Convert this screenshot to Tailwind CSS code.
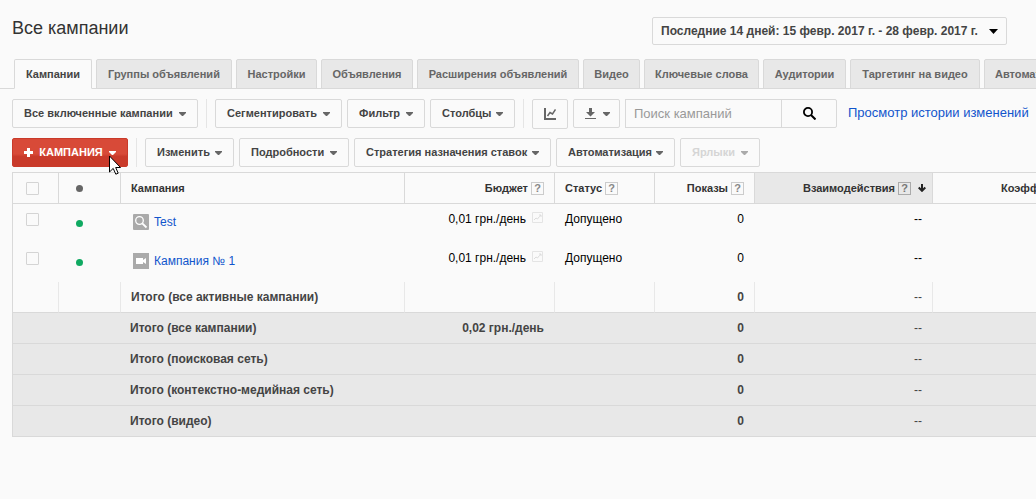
<!DOCTYPE html>
<html lang="ru">
<head>
  <meta charset="UTF-8" />
  <meta name="viewport" content="width=device-width,initial-scale=1" />
  <title>Все кампании</title>
  <script src="https://cdn.jsdelivr.net/npm/@tailwindcss/browser@4"></script>
</head>
<body class="min-h-screen overflow-x-hidden bg-[#fafafa] font-['Liberation_Sans',Arial,sans-serif] text-xs text-[#444]">

<!-- Shared icons -->
<svg class="hidden" aria-hidden="true">
  <symbol id="caret" viewBox="0 0 7 4"><path d="M0 0h7v1L4 4H3L0 1z" fill="currentColor"/></symbol>
  <symbol id="spark" viewBox="0 0 11 11">
    <path d="M.5.5h10v10H.5z" fill="none" stroke="#e4e4e4"/>
    <path d="M2 8l2-2 1.500 1 2-2.500L9 3M7 3h2v2" fill="none" stroke="#dcdcdc"/>
  </symbol>
</svg>

<header class="flex h-[59px] items-start justify-between pt-[17px] pr-[29px] pl-3">
  <h1 class="text-lg leading-[22px] text-[#333]">Все кампании</h1>
  <button class="flex h-7 w-[355px] items-center justify-between rounded-xs border border-[#d9d9d9] px-2 font-bold whitespace-nowrap">
    Последние 14 дней: 15 февр. 2017 г. - 28 февр. 2017 г.
    <svg class="h-[5px] w-[9px] text-black" viewBox="0 0 9 5"><path d="M0 0h9L4.500 5z" fill="currentColor"/></svg>
  </button>
</header>

<nav class="border-b border-[#d9d9d9] pl-[14px]">
  <div class="-mb-px flex gap-1 text-[11px] font-bold whitespace-nowrap text-[#666]">
    <a href="#" class="flex h-[30px] w-[78px] shrink-0 items-center justify-center rounded-t-xs border border-[#d9d9d9] border-b-[#fafafa] bg-[#fafafa] text-[#444]">Кампании</a>
    <a href="#" class="flex h-[30px] w-[136px] shrink-0 items-center justify-center rounded-t-xs border border-[#d9d9d9] bg-[#e8e8e8]">Группы объявлений</a>
    <a href="#" class="flex h-[30px] w-[81px] shrink-0 items-center justify-center rounded-t-xs border border-[#d9d9d9] bg-[#e8e8e8]">Настройки</a>
    <a href="#" class="flex h-[30px] w-[92px] shrink-0 items-center justify-center rounded-t-xs border border-[#d9d9d9] bg-[#e8e8e8]">Объявления</a>
    <a href="#" class="flex h-[30px] w-[162px] shrink-0 items-center justify-center rounded-t-xs border border-[#d9d9d9] bg-[#e8e8e8]">Расширения объявлений</a>
    <a href="#" class="flex h-[30px] w-[57px] shrink-0 items-center justify-center rounded-t-xs border border-[#d9d9d9] bg-[#e8e8e8]">Видео</a>
    <a href="#" class="flex h-[30px] w-[115px] shrink-0 items-center justify-center rounded-t-xs border border-[#d9d9d9] bg-[#e8e8e8]">Ключевые слова</a>
    <a href="#" class="flex h-[30px] w-[83px] shrink-0 items-center justify-center rounded-t-xs border border-[#d9d9d9] bg-[#e8e8e8]">Аудитории</a>
    <a href="#" class="flex h-[30px] w-[130px] shrink-0 items-center justify-center rounded-t-xs border border-[#d9d9d9] bg-[#e8e8e8]">Таргетинг на видео</a>
    <a href="#" class="flex h-[30px] shrink-0 items-center rounded-t-xs border border-[#d9d9d9] bg-[#e8e8e8] px-[10px]">Автоматические</a>
  </div>
</nav>

<main class="pl-3">
  <div class="flex h-[49px] items-start pt-[10px] text-[11px] font-bold whitespace-nowrap">
    <button class="flex h-[29px] w-[186px] shrink-0 items-center justify-between rounded-xs border border-[#d9d9d9] px-[11px]">Все включенные кампании <svg class="h-1 w-[7px] text-[#666]"><use href="#caret"/></svg></button>
    <div class="mx-2 h-[29px] w-px shrink-0 bg-[#e5e5e5]"></div>
    <div class="flex shrink-0 gap-[5px]">
      <button class="flex h-[29px] w-[127px] items-center justify-between rounded-xs border border-[#d9d9d9] px-[11px]">Сегментировать <svg class="h-1 w-[7px] text-[#666]"><use href="#caret"/></svg></button>
      <button class="flex h-[29px] w-[78px] items-center justify-between rounded-xs border border-[#d9d9d9] px-[11px]">Фильтр <svg class="h-1 w-[7px] text-[#666]"><use href="#caret"/></svg></button>
      <button class="flex h-[29px] w-[85px] items-center justify-between rounded-xs border border-[#d9d9d9] px-[11px]">Столбцы <svg class="h-1 w-[7px] text-[#666]"><use href="#caret"/></svg></button>
    </div>
    <div class="mx-2 h-[29px] w-px shrink-0 bg-[#e5e5e5]"></div>
    <div class="flex shrink-0 gap-[5px]">
      <button class="flex h-[30px] w-9 items-center justify-center rounded-xs border border-[#d9d9d9]" aria-label="График">
        <svg class="h-3 w-3" viewBox="0 0 12 12" fill="none" stroke="#666"><path d="M1 0v11h11" stroke-width="2"/><path d="M3.500 8L6 4.500 8.500 6 11.500 1.500" stroke-width="1.500"/></svg>
      </button>
      <button class="flex h-[29px] w-[47px] items-center justify-between rounded-xs border border-[#d9d9d9] pr-[9px] pl-[11px]" aria-label="Скачать">
        <svg class="h-[11px] w-[11px]" viewBox="0 0 11 11" fill="#666"><path d="M4 0h3v4h3L5.500 8.500 1 4h3zM0 10h11v1H0z"/></svg>
        <svg class="h-1 w-[7px] text-[#666]"><use href="#caret"/></svg>
      </button>
      <div class="flex">
        <input type="text" aria-label="Поиск кампаний" placeholder="Поиск кампаний" class="h-[29px] w-[157px] border border-[#d9d9d9] px-2 text-[13px] font-normal placeholder:text-[#999]" />
        <button class="-ml-px flex h-[29px] w-14 items-center justify-center rounded-r-xs border border-[#d9d9d9]" aria-label="Искать">
          <svg class="h-[13px] w-[13px]" viewBox="0 0 13 13" fill="none" stroke="#000"><circle cx="5" cy="5" r="4.100" stroke-width="1.800"/><path d="M8 8l4.500 4.500" stroke-width="2"/></svg>
        </button>
      </div>
    </div>
    <a href="#" class="ml-[11px] text-[13px] leading-[27px] font-normal text-[#15c]">Просмотр истории изменений</a>
  </div>

  <div class="flex h-[34px] items-start text-[11px] font-bold whitespace-nowrap">
    <div class="relative shrink-0">
      <button class="flex h-[29px] w-[116px] items-center justify-between rounded-xs border border-[#c93a2a] bg-linear-to-b from-[#d84a38] from-55% to-[#c93a2a] to-65% px-[11px] text-white">
        <svg class="h-[9px] w-[9px]" viewBox="0 0 9 9" fill="#fff"><path d="M3 0h3v3h3v3H6v3H3V6H0V3h3z"/></svg>
        КАМПАНИЯ
        <svg class="h-1 w-[7px]"><use href="#caret"/></svg>
      </button>
      <!-- Pointer -->
      <svg class="absolute top-[17px] left-[97px] z-10 h-[20px] w-3" viewBox="0 0 12 20"><path d="M.5 1v16l3.700-3.600 2.600 5.800 2.400-1-2.500-5.700h4.800z" fill="#fff" stroke="#000"/></svg>
    </div>
    <div class="mx-2 h-[29px] w-px shrink-0 bg-[#e5e5e5]"></div>
    <div class="flex shrink-0 gap-[5px]">
      <button class="flex h-[29px] w-[89px] items-center justify-between rounded-xs border border-[#d9d9d9] px-[11px]">Изменить <svg class="h-1 w-[7px] text-[#666]"><use href="#caret"/></svg></button>
      <button class="flex h-[29px] w-[110px] items-center justify-between rounded-xs border border-[#d9d9d9] px-[11px]">Подробности <svg class="h-1 w-[7px] text-[#666]"><use href="#caret"/></svg></button>
      <button class="flex h-[29px] w-[197px] items-center justify-between rounded-xs border border-[#d9d9d9] px-[11px]">Стратегия назначения ставок <svg class="h-1 w-[7px] text-[#666]"><use href="#caret"/></svg></button>
      <button class="flex h-[29px] w-[119px] items-center justify-between rounded-xs border border-[#d9d9d9] px-[11px]">Автоматизация <svg class="h-1 w-[7px] text-[#666]"><use href="#caret"/></svg></button>
      <button disabled class="flex h-[29px] w-20 items-center justify-between rounded-xs border border-[#d9d9d9] px-[11px] text-[#d5d5d5]">Ярлыки <svg class="h-1 w-[7px] text-[#aaa]"><use href="#caret"/></svg></button>
    </div>
  </div>

  <div class="overflow-hidden">
    <table class="w-full min-w-[1120px] table-fixed border-separate border-spacing-0 border-l border-[#d9d9d9] text-right whitespace-nowrap">
      <colgroup>
        <col class="w-[45px]" /><col class="w-[62px]" /><col class="w-[284px]" /><col class="w-[150px]" />
        <col class="w-[100px]" /><col class="w-[100px]" /><col class="w-[178px]" /><col />
      </colgroup>
      <thead class="text-[11px] text-[#333]">
        <tr class="h-8 *:border-y *:border-[#d9d9d9]">
          <th class="pl-[13px]"><input type="checkbox" aria-label="Выбрать все" class="block h-[13px] w-[13px] appearance-none rounded-[1px] border border-[#d4d4d4]" /></th>
          <th class="border-l pl-[17px]"><div class="h-[7px] w-[7px] rounded-full bg-[#666]"></div></th>
          <th class="border-l px-[10px] text-left">Кампания</th>
          <th class="border-l px-[10px]"><div class="flex items-center justify-end gap-[3px]">Бюджет <button class="h-[13px] w-[13px] border border-[#ccc] text-center leading-[11px] text-[#888]">?</button></div></th>
          <th class="border-l px-[10px]"><div class="flex items-center gap-[3px]">Статус <button class="h-[13px] w-[13px] border border-[#ccc] text-center leading-[11px] text-[#888]">?</button></div></th>
          <th class="border-l px-[10px]"><div class="flex items-center justify-end gap-[3px]">Показы <button class="h-[13px] w-[13px] border border-[#ccc] text-center leading-[11px] text-[#888]">?</button></div></th>
          <th class="border-l bg-[#e8e8e8] pr-[6px]"><div class="flex items-center justify-end gap-[3px]">Взаимодействия <button class="h-[13px] w-[13px] border border-[#aaa] text-center leading-[11px] text-[#777]">?</button>
            <svg class="ml-1 h-2 w-2" viewBox="0 0 8 8" fill="none" stroke="#222" stroke-width="2"><path d="M4 0v7M.7 3.500L4 6.800l3.300-3.300"/></svg></div></th>
          <th class="border-l pl-[68px] text-left">Коэффициент</th>
        </tr>
      </thead>
      <tbody class="text-black">
        <tr class="h-[39px] align-top">
          <td class="pt-[9px] pl-[13px]"><input type="checkbox" aria-label="Test" class="block h-[13px] w-[13px] appearance-none rounded-[1px] border border-[#d4d4d4]" /></td>
          <td class="pt-4 pl-[18px]"><div class="h-[7px] w-[7px] rounded-full bg-[#0fa961]"></div></td>
          <td class="pt-[10px] pl-[13px]"><div class="flex items-center gap-[5px]">
            <svg class="h-4 w-4" viewBox="0 0 16 16" fill="none" stroke="#fff"><rect width="16" height="16" rx="1" fill="#aaa" stroke="none"/><circle cx="6.500" cy="6.500" r="3.800" stroke-width="1.300"/><path d="M9.300 9.300l4.200 4.200" stroke-width="1.800"/></svg>
            <a href="#" class="text-[#15c]">Test</a></div></td>
          <td class="pt-[7px] pr-[11px]"><div class="flex items-start justify-end gap-[6px]">0,01 грн./день <svg class="mt-px h-[11px] w-[11px]"><use href="#spark"/></svg></div></td>
          <td class="pt-[7px] pl-[11px] text-left">Допущено</td>
          <td class="pt-[7px] pr-[10px]">0</td>
          <td class="pt-[7px] pr-[10px]">--</td>
          <td></td>
        </tr>
        <tr class="h-[39px] align-top">
          <td class="pt-[9px] pl-[13px]"><input type="checkbox" aria-label="Кампания № 1" class="block h-[13px] w-[13px] appearance-none rounded-[1px] border border-[#d4d4d4]" /></td>
          <td class="pt-4 pl-[18px]"><div class="h-[7px] w-[7px] rounded-full bg-[#0fa961]"></div></td>
          <td class="pt-[10px] pl-[13px]"><div class="flex items-center gap-[5px]">
            <svg class="h-4 w-4" viewBox="0 0 16 16" fill="#fff"><path d="M0 0h16v16H0z" fill="#aaa"/><path d="M3 5h7v2l3-2v6l-3-2v2H3z"/></svg>
            <a href="#" class="text-[#15c]">Кампания № 1</a></div></td>
          <td class="pt-[7px] pr-[11px]"><div class="flex items-start justify-end gap-[6px]">0,01 грн./день <svg class="mt-px h-[11px] w-[11px]"><use href="#spark"/></svg></div></td>
          <td class="pt-[7px] pl-[11px] text-left">Допущено</td>
          <td class="pt-[7px] pr-[10px]">0</td>
          <td class="pt-[7px] pr-[10px]">--</td>
          <td></td>
        </tr>
      </tbody>
      <tfoot class="font-bold">
        <tr class="h-[31px] *:border-b *:border-b-[#d9d9d9] *:border-l-[#e8e8e8]">
          <td></td><td class="border-l"></td>
          <td class="border-l px-[10px] text-left">Итого (все активные кампании)</td>
          <td class="border-l"></td><td class="border-l"></td>
          <td class="border-l px-[10px]">0</td><td class="border-l px-[10px] font-normal">--</td><td class="border-l"></td>
        </tr>
        <tr class="h-[31px] bg-[#e8e8e8] *:border-b *:border-[#d9d9d9]">
          <td></td><td></td><td class="px-[10px] text-left">Итого (все кампании)</td>
          <td class="px-[10px]">0,02 грн./день</td><td></td><td class="px-[10px]">0</td><td class="px-[10px] font-normal">--</td><td></td>
        </tr>
        <tr class="h-[31px] bg-[#e8e8e8] *:border-b *:border-[#d9d9d9]">
          <td></td><td></td><td class="px-[10px] text-left">Итого (поисковая сеть)</td>
          <td></td><td></td><td class="px-[10px]">0</td><td class="px-[10px] font-normal">--</td><td></td>
        </tr>
        <tr class="h-[31px] bg-[#e8e8e8] *:border-b *:border-[#d9d9d9]">
          <td></td><td></td><td class="px-[10px] text-left">Итого (контекстно-медийная сеть)</td>
          <td></td><td></td><td class="px-[10px]">0</td><td class="px-[10px] font-normal">--</td><td></td>
        </tr>
        <tr class="h-[31px] bg-[#e8e8e8] *:border-b *:border-[#d9d9d9]">
          <td></td><td></td><td class="px-[10px] text-left">Итого (видео)</td>
          <td></td><td></td><td class="px-[10px]">0</td><td class="px-[10px] font-normal">--</td><td></td>
        </tr>
      </tfoot>
    </table>
  </div>
</main>

</body>
</html>
